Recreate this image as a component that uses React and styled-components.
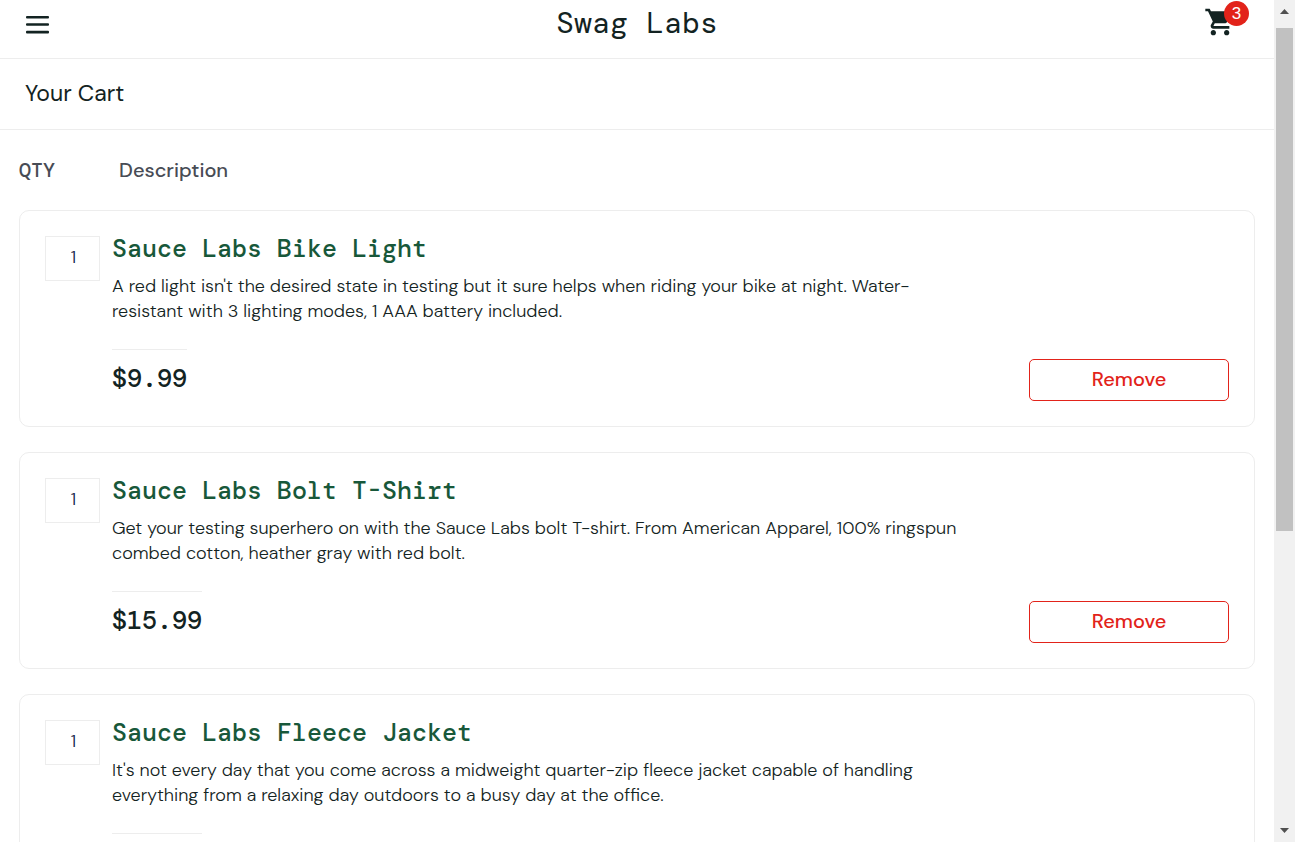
import React from "react";
import styled, { createGlobalStyle } from "styled-components";
import { MdShoppingCart } from "react-icons/md";

const sans = `"DM Sans", Inter, "Open Sans", sans-serif`;
const mono = `"DM Mono", "Liberation Mono", monospace`;

const GlobalStyle = createGlobalStyle`
  *, *::before, *::after { box-sizing: border-box; }
  body {
    margin: 0;
    background: #ffffff;
    color: #132322;
    font-family: ${sans};
  }
`;

const Shell = styled.div`
  display: flex;
  height: 100vh;
  overflow: hidden;
`;

const Page = styled.div`
  flex: 1;
  min-width: 0;
  overflow-y: auto;
  scrollbar-width: none;
`;

const Header = styled.header`
  display: grid;
  grid-template-columns: 1fr auto 1fr;
  align-items: start;
  height: 59px;
  padding: 0 25px;
  border-bottom: 1px solid #ededed;
`;

const MenuButton = styled.button`
  justify-self: start;
  display: flex;
  margin: 12px 0 0;
  padding: 0;
  border: 0;
  background: none;
  color: #132322;
  cursor: pointer;
`;

const Brand = styled.div`
  font-family: ${mono};
  font-size: 30px;
  line-height: 46px;
`;

const CartLink = styled.a`
  position: relative;
  justify-self: end;
  display: flex;
  width: 45px;
  padding-top: 6px;
  color: #132322;
`;

const Badge = styled.span`
  position: absolute;
  top: 1px;
  right: 0;
  width: 25px;
  height: 25px;
  border-radius: 50%;
  background: #e2231a;
  color: #ffffff;
  font-family: "Liberation Sans", Arial, sans-serif;
  font-size: 17px;
  line-height: 25px;
  text-align: center;
`;

const SubHeader = styled.div`
  padding: 0 25px 2px;
  border-bottom: 1px solid #ededed;
`;

const PageTitle = styled.h1`
  margin: 0;
  font-size: 23px;
  font-weight: 400;
  line-height: 68px;
`;

const Cart = styled.main`
  padding: 28px 19px 25px;
`;

const ColumnLabels = styled.div`
  display: flex;
  margin-bottom: 27px;
  color: #484c55;
  font-size: 20px;
  font-weight: 500;
  line-height: 25px;
`;

const QtyLabel = styled.div`
  width: 100px;
  font-family: ${mono};
`;

const CartList = styled.ul`
  display: flex;
  flex-direction: column;
  gap: 25px;
  margin: 0;
  padding: 0;
  list-style: none;
`;

const Card = styled.li`
  display: flex;
  gap: 12px;
  padding: 25px;
  border: 1px solid #ededed;
  border-radius: 10px;
`;

const Quantity = styled.div`
  flex: none;
  width: 55px;
  height: 45px;
  padding-left: 2px;
  border: 1px solid #ededed;
  color: #131c45;
  font-size: 18px;
  font-weight: 300;
  line-height: 40px;
  text-align: center;
`;

const Details = styled.div`
  flex: 1;
  min-width: 0;
`;

const ItemName = styled.a`
  display: block;
  color: #18583a;
  font-family: ${mono};
  font-size: 25px;
  font-weight: 500;
  line-height: 25px;
  text-decoration: none;
`;

const Description = styled.p`
  max-width: 855px;
  margin: 13px 0 25px;
  font-size: 18px;
  font-weight: 300;
  line-height: 25px;
`;

const PriceBar = styled.div`
  display: flex;
  justify-content: space-between;
  align-items: flex-start;
`;

const Price = styled.div`
  padding-top: 16px;
  border-top: 1px solid #ededed;
  font-family: ${mono};
  font-size: 25px;
  font-weight: 500;
  line-height: 25px;
`;

const RemoveButton = styled.button`
  width: 200px;
  height: 42px;
  margin-top: 10px;
  padding: 0 0 2px;
  border: 1px solid #e2231a;
  border-radius: 5px;
  background: #ffffff;
  color: #e2231a;
  font-family: ${sans};
  font-size: 20px;
  font-weight: 500;
  cursor: pointer;
`;

const ScrollTrack = styled.div`
  display: flex;
  flex: none;
  flex-direction: column;
  width: 21px;
  padding: 0 2px;
  background: #f1f1f1;
`;

const ScrollArrow = styled.svg`
  flex: none;
  display: block;
  width: 17px;
  height: 28px;
  fill: #505050;
`;

const ScrollThumb = styled.div`
  flex: 503 1 0;
  background: #c1c1c1;
`;

const ScrollRest = styled.div`
  flex: 283 1 0;
`;

const items = [
  {
    name: "Sauce Labs Bike Light",
    description:
      "A red light isn't the desired state in testing but it sure helps when riding your bike at night. Water-resistant with 3 lighting modes, 1 AAA battery included.",
    price: "$9.99",
  },
  {
    name: "Sauce Labs Bolt T-Shirt",
    description:
      "Get your testing superhero on with the Sauce Labs bolt T-shirt. From American Apparel, 100% ringspun combed cotton, heather gray with red bolt.",
    price: "$15.99",
  },
  {
    name: "Sauce Labs Fleece Jacket",
    description:
      "It's not every day that you come across a midweight quarter-zip fleece jacket capable of handling everything from a relaxing day outdoors to a busy day at the office.",
    price: "$49.99",
  },
];

function CartItem({ name, description, price }) {
  return (
    <Card>
      <Quantity>1</Quantity>
      <Details>
        <ItemName href="#">{name}</ItemName>
        <Description>{description}</Description>
        <PriceBar>
          <Price>{price}</Price>
          <RemoveButton type="button">Remove</RemoveButton>
        </PriceBar>
      </Details>
    </Card>
  );
}

export default function App() {
  return (
    <>
      <GlobalStyle />
      <Shell>
        <Page>
          <Header>
            <MenuButton type="button" aria-label="Open menu">
              <svg width="25" height="25" viewBox="0 0 25 25" fill="currentColor">
                <rect x="1" y="4" width="23" height="2.6" rx="1" />
                <rect x="1" y="11.2" width="23" height="2.6" rx="1" />
                <rect x="1" y="18.8" width="23" height="2.6" rx="1" />
              </svg>
            </MenuButton>
            <Brand>Swag Labs</Brand>
            <CartLink href="#" aria-label="Cart">
              <MdShoppingCart size={32} />
              <Badge>3</Badge>
            </CartLink>
          </Header>
          <SubHeader>
            <PageTitle>Your Cart</PageTitle>
          </SubHeader>
          <Cart>
            <ColumnLabels>
              <QtyLabel>QTY</QtyLabel>
              <div>Description</div>
            </ColumnLabels>
            <CartList>
              {items.map((item) => (
                <CartItem key={item.name} {...item} />
              ))}
            </CartList>
          </Cart>
        </Page>
        <ScrollTrack aria-hidden="true">
          <ScrollArrow viewBox="0 0 17 28">
            <path d="M4 14h9L8.500 9z" />
          </ScrollArrow>
          <ScrollThumb />
          <ScrollRest />
          <ScrollArrow viewBox="0 0 17 28">
            <path d="M4 14h9L8.500 19z" />
          </ScrollArrow>
        </ScrollTrack>
      </Shell>
    </>
  );
}
